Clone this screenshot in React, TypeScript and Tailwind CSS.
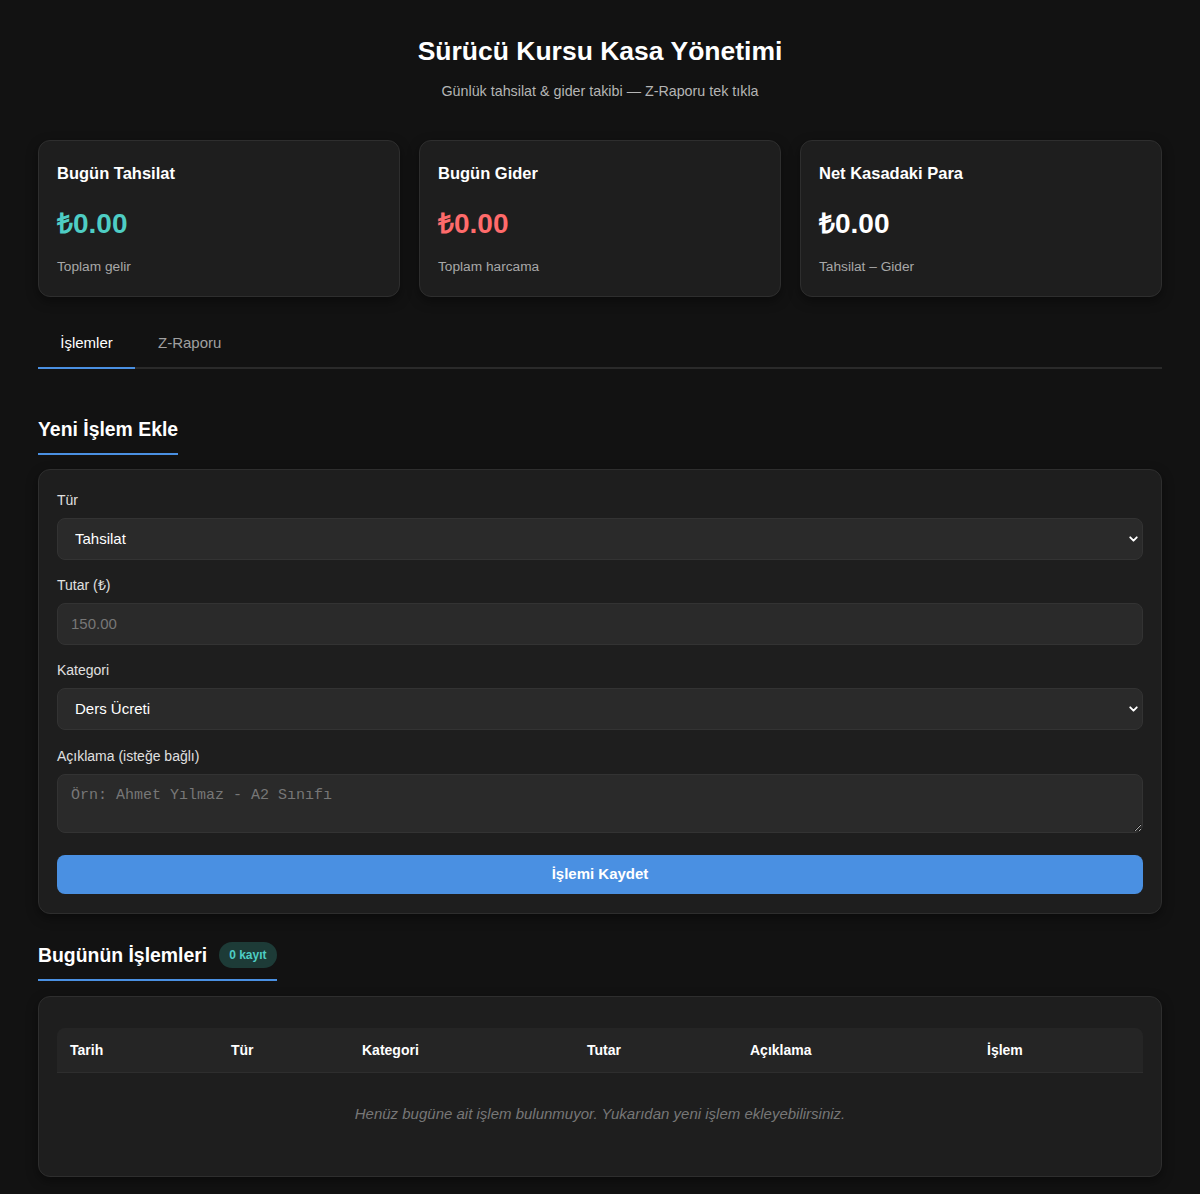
import { ChevronDown } from 'lucide-react'

const stats = [
  { title: 'Bugün Tahsilat', amount: '₺0.00', color: 'text-[#4ecdc4]', note: 'Toplam gelir' },
  { title: 'Bugün Gider', amount: '₺0.00', color: 'text-[#ff6b6b]', note: 'Toplam harcama' },
  { title: 'Net Kasadaki Para', amount: '₺0.00', color: 'text-white', note: 'Tahsilat – Gider' },
]

const columns = [
  { label: 'Tarih', w: 'w-[161px]' },
  { label: 'Tür', w: 'w-[131px]' },
  { label: 'Kategori', w: 'w-[225px]' },
  { label: 'Tutar', w: 'w-[163px]' },
  { label: 'Açıklama', w: 'w-[237px]' },
  { label: 'İşlem', w: 'w-[169px]' },
]

const fieldBase =
  'w-full h-[42px] rounded-lg border border-[#333] bg-[#2a2a2a] text-[15px] text-white outline-none'

function Label({ children }: { children: React.ReactNode }) {
  return <label className="mb-2 block text-[14px] leading-5 text-[#e0e0e0]">{children}</label>
}

function Select({ value, options }: { value: string; options: string[] }) {
  return (
    <div className="relative">
      <select
        defaultValue={value}
        className={`${fieldBase} appearance-none pl-[17px] pr-10`}
      >
        {options.map((o) => (
          <option key={o}>{o}</option>
        ))}
      </select>
      <ChevronDown
        size={13}
        strokeWidth={3.5}
        className="pointer-events-none absolute right-[3px] top-1/2 -translate-y-1/2 text-white"
      />
    </div>
  )
}

export default function App() {
  return (
    <div
      className="min-h-screen bg-[#121212] px-[38px] pb-4 pt-[35px] text-white"
      style={{ fontFamily: '"Liberation Sans", Arial, sans-serif' }}
    >
      <header className="text-center">
        <h1 className="text-[26.5px] font-bold leading-8">Sürücü Kursu Kasa Yönetimi</h1>
        <p className="mt-[14px] text-[14.3px] text-[#b5b5b5]">
          Günlük tahsilat &amp; gider takibi — Z-Raporu tek tıkla
        </p>
      </header>

      <section className="mt-[38px] grid grid-cols-3 gap-[19px]">
        {stats.map((s) => (
          <div
            key={s.title}
            className="h-[157px] rounded-xl border border-[#2e2e2e] bg-[#1e1e1e] px-[18px] pt-[22px] shadow-[0_4px_12px_rgba(0,0,0,0.4)]"
          >
            <h3 className="text-[16.5px] font-bold leading-5">{s.title}</h3>
            <div className={`mt-[25px] text-[28px] font-bold leading-8 ${s.color}`}>{s.amount}</div>
            <p className="mt-[17px] text-[13.7px] text-[#a8a8a8]">{s.note}</p>
          </div>
        ))}
      </section>

      <nav className="mt-[25px] flex border-b-2 border-[#2a2a2a]">
        <button className="-mb-[2px] w-[97px] border-b-2 border-[#4a90e2] pb-[12px] pt-[10px] text-[15px] text-white">
          İşlemler
        </button>
        <button className="px-[23px] pb-[12px] pt-[10px] text-[15px] text-[#a0a0a0]">Z-Raporu</button>
      </nav>

      <div className="mt-[48px]">
        <h2 className="inline-block border-b-2 border-[#4a90e2] pb-[12px] text-[19.4px] font-bold leading-6">
          Yeni İşlem Ekle
        </h2>
      </div>

      <form className="mt-[14px] rounded-xl border border-[#2e2e2e] bg-[#1e1e1e] px-[18px] pb-[19px] pt-[20px] shadow-[0_4px_12px_rgba(0,0,0,0.4)]">
        <Label>Tür</Label>
        <Select value="Tahsilat" options={['Tahsilat', 'Gider']} />

        <div className="mt-[15px]">
          <Label>Tutar (₺)</Label>
          <input
            placeholder="150.00"
            className={`${fieldBase} px-[13px] placeholder:text-[#777]`}
          />
        </div>

        <div className="mt-[15px]">
          <Label>Kategori</Label>
          <Select value="Ders Ücreti" options={['Ders Ücreti', 'Sınav Ücreti', 'Yakıt', 'Diğer']} />
        </div>

        <div className="mt-[16px]">
          <Label>Açıklama (isteğe bağlı)</Label>
          <textarea
            placeholder="Örn: Ahmet Yılmaz - A2 Sınıfı"
            className="block h-[59px] w-full rounded-lg border border-[#333] bg-[#2a2a2a] px-[13px] py-[10px] text-[15px] text-white outline-none placeholder:text-[#777]"
            style={{ fontFamily: '"Liberation Mono", monospace' }}
          />
        </div>

        <button
          type="button"
          className="mt-[22px] h-[39px] w-full rounded-lg bg-[#4a90e2] text-[15px] font-bold text-white"
        >
          İşlemi Kaydet
        </button>
      </form>

      <div className="mt-[28px] inline-flex items-center gap-[12px] border-b-2 border-[#4a90e2] pb-[11px]">
        <h2 className="text-[19.4px] font-bold leading-6">Bugünün İşlemleri</h2>
        <span className="rounded-full bg-[#1d3b37] px-[10px] py-[6px] text-[12px] font-bold leading-[14px] text-[#4ecdc4]">
          0 kayıt
        </span>
      </div>

      <section className="mt-[15px] rounded-xl border border-[#2e2e2e] bg-[#1e1e1e] px-[18px] pb-[21px] pt-[31px] shadow-[0_4px_12px_rgba(0,0,0,0.4)]">
        <table className="w-full border-collapse text-left">
          <thead>
            <tr className="bg-[#252525]">
              {columns.map((c, i) => (
                <th
                  key={c.label}
                  className={`${c.w} h-[45px] border-b border-[#2e2e2e] px-[13px] text-[14px] font-bold ${
                    i === 0 ? 'rounded-tl-lg' : ''
                  } ${i === columns.length - 1 ? 'rounded-tr-lg' : ''}`}
                >
                  {c.label}
                </th>
              ))}
            </tr>
          </thead>
          <tbody>
            <tr>
              <td colSpan={6} className="h-[82px] text-center text-[15px] italic text-[#777]">
                Henüz bugüne ait işlem bulunmuyor. Yukarıdan yeni işlem ekleyebilirsiniz.
              </td>
            </tr>
          </tbody>
        </table>
      </section>
    </div>
  )
}
